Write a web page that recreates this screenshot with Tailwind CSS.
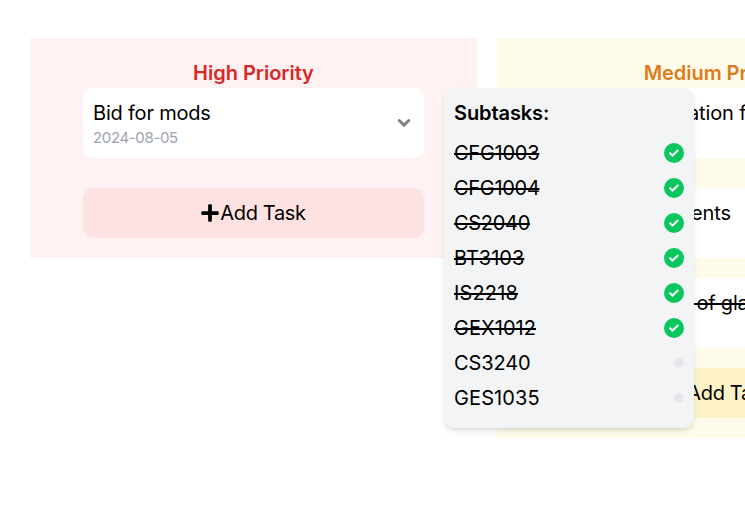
<!DOCTYPE html>
<html lang="en">
<head>
<meta charset="utf-8">
<title>Tasks</title>
<script src="https://cdn.jsdelivr.net/npm/@tailwindcss/browser@4"></script>
</head>
<body class="bg-white overflow-hidden h-[505px] font-['Inter','Liberation_Sans',sans-serif] text-[20px] leading-[30px] text-black">
<svg class="hidden">
  <symbol id="plus" viewBox="0 0 448 512"><path d="M416 208H272V64c0-17.67-14.33-32-32-32h-32c-17.67 0-32 14.33-32 32v144H32c-17.67 0-32 14.33-32 32v32c0 17.67 14.33 32 32 32h144v144c0 17.67 14.33 32 32 32h32c17.67 0 32-14.33 32-32V304h144c17.67 0 32-14.33 32-32v-32c0-17.67-14.33-32-32-32z"/></symbol>
  <symbol id="check" viewBox="0 0 20 20"><circle cx="10" cy="10" r="10" fill="#0ac75d"/><path d="M5.600 9.700l2.900 2.900 5.800-5.500" fill="none" stroke="#fff" stroke-width="2"/></symbol>
</svg>
<main class="relative flex items-start gap-5 pt-[38px] pl-[30px] w-[974px]">
  <section class="w-[447px] shrink-0 bg-[#fef2f2] px-[53px] py-5">
    <h2 class="text-center font-semibold text-[#dc2626]"><span class="tracking-[-0.02px]">High Priority</span></h2>
    <div class="flex h-[70px] items-center justify-between rounded-[10px] bg-white px-[10px]">
      <div>
        <div class="tracking-[-0.2px] h-[30px]">Bid for mods</div>
        <div class="h-5 text-[15px] leading-5 tracking-[-0.35px] text-[#9ca3af]">2024-08-05</div>
      </div>
      <svg class="mr-[3px] h-[10px] w-[14px]" viewBox="0 0 14 10"><path d="M2.2 2.5L7 7.1l4.800-4.600" fill="none" stroke="#808080" stroke-width="3" stroke-linecap="round"/></svg>
    </div>
    <button class="mt-[30px] flex h-[50px] w-full items-center justify-center rounded-[10px] bg-[#fee2e2]"><svg class="h-5 w-[18px]"><use href="#plus"/></svg><span class="pl-px tracking-[-0.35px]">Add Task</span></button>
  </section>
  <section class="w-[447px] shrink-0 bg-[#fffbeb] px-[53px] py-5">
    <h2 class="text-center font-semibold text-[#de7b1b]"><span class="tracking-[-0.05px]">Medium Priority</span></h2>
    <div class="h-[70px] rounded-[10px] bg-white pt-[10px] pl-[138px] tracking-[-0.15px]">ation for</div>
    <div class="mt-[30px] h-[70px] rounded-[10px] bg-white pt-[10px] pl-[141px] tracking-[-0.1px]">ents</div>
    <div class="mt-5 h-[70px] rounded-[10px] bg-white pt-[10px] pl-[141px]"><span class="line-through decoration-2 tracking-[-0.2px] whitespace-pre"> of glass</span></div>
    <button class="mt-5 flex h-[50px] w-full items-center justify-center rounded-[10px] bg-[#fef3c7]"><svg class="h-5 w-[18px]"><use href="#plus"/></svg><span class="pl-px tracking-[-0.35px]">Add Task</span></button>
  </section>
  <aside class="absolute left-[444px] top-[88px] h-[340px] w-[250px] rounded-[10px] bg-[#f3f4f6] p-[10px] shadow-md">
    <h3 class="mb-[10px] font-semibold tracking-[-0.1px]">Subtasks:</h3>
    <ul class="flex flex-col gap-[5px]">
      <li class="flex h-[30px] items-center justify-between"><span class="line-through decoration-2 tracking-[-0.25px]">CFG1003</span><svg class="size-5"><use href="#check"/></svg></li>
      <li class="flex h-[30px] items-center justify-between"><span class="line-through decoration-2 tracking-[-0.3px]">CFG1004</span><svg class="size-5"><use href="#check"/></svg></li>
      <li class="flex h-[30px] items-center justify-between"><span class="line-through decoration-2 tracking-[-0.3px]">CS2040</span><svg class="size-5"><use href="#check"/></svg></li>
      <li class="flex h-[30px] items-center justify-between"><span class="line-through decoration-2 tracking-[0px]">BT3103</span><svg class="size-5"><use href="#check"/></svg></li>
      <li class="flex h-[30px] items-center justify-between"><span class="line-through decoration-2 tracking-[0.15px]">IS2218</span><svg class="size-5"><use href="#check"/></svg></li>
      <li class="flex h-[30px] items-center justify-between"><span class="line-through decoration-2 tracking-[0.05px]">GEX1012</span><svg class="size-5"><use href="#check"/></svg></li>
      <li class="flex h-[30px] items-center justify-between"><span class="tracking-[-0.1px]">CS3240</span><i class="size-[10px] rounded-full bg-[#e5e7eb]"></i></li>
      <li class="flex h-[30px] items-center justify-between"><span class="tracking-[0.1px]">GES1035</span><i class="size-[10px] rounded-full bg-[#e5e7eb]"></i></li>
    </ul>
  </aside>
</main>
</body>
</html>
